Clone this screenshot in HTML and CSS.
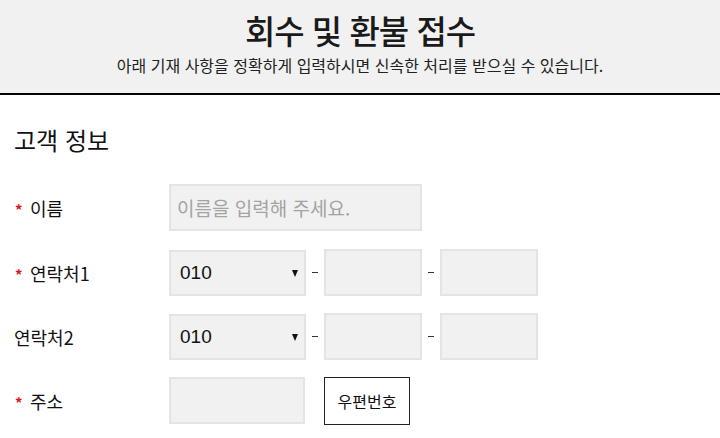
FILE: index.html
```html
<!DOCTYPE html>
<html lang="ko">
  <head>
    <meta charset="utf-8">
    <title>회수 및 환불 접수</title>
    <link rel="stylesheet" href="styles.css">
  </head>
  <body>
    <div class="top">
      <h1>회수 및 환불 접수</h1>
      <p>아래 기재 사항을 정확하게 입력하시면 신속한 처리를 받으실 수 있습니다.</p>
    </div>

    <div class="section">
      <h2>고객 정보</h2>

      <div class="row">
        <label class="label"><span class="req">*</span>이름</label>
        <input type="text" class="field wide" placeholder="이름을 입력해 주세요.">
      </div>

      <div class="row">
        <label class="label"><span class="req">*</span>연락처1</label>
        <div class="pick">
          <select class="field">
            <option>010</option>
            <option>011</option>
            <option>016</option>
          </select>
        </div>
        <span class="dash"></span>
        <input type="text" class="field short">
        <span class="dash"></span>
        <input type="text" class="field short">
      </div>

      <div class="row">
        <label class="label">연락처2</label>
        <div class="pick">
          <select class="field">
            <option>010</option>
            <option>011</option>
            <option>016</option>
          </select>
        </div>
        <span class="dash"></span>
        <input type="text" class="field short">
        <span class="dash"></span>
        <input type="text" class="field short">
      </div>

      <div class="row">
        <label class="label"><span class="req">*</span>주소</label>
        <input type="text" class="field zip">
        <button type="button" class="btn">우편번호</button>
      </div>
    </div>
  </body>
</html>
```

FILE: styles.css
```css
BODY
{
	margin: 0;
	font-family: "Noto Sans CJK KR", "Noto Sans", sans-serif;
	color: #111;
	background: #FFF;
}
.top
{
	height: 93px;
	background: #F1F1F1;
	border-bottom: 2px solid #000;
	text-align: center;
}
.top H1
{
	margin: 0;
	padding-top: 9px;
	font-size: 33px;
	line-height: 42px;
	font-weight: 500;
	letter-spacing: -1px;
	color: #1A1A1A;
}
.top P
{
	margin: 3px 0 0;
	font-size: 16px;
	line-height: 22px;
	color: #222;
}
.section
{
	padding: 0 14px;
}
.section H2
{
	margin: 28px 0 28px;
	font-size: 24px;
	line-height: 33px;
	font-weight: 400;
}
.row
{
	display: flex;
	align-items: center;
	height: 47px;
	margin-bottom: 17px;
}
.row:first-of-type
{
	margin-bottom: 18px;
}
.label
{
	width: 155px;
	font-size: 18px;
	display: flex;
	align-items: center;
}
.req
{
	color: #E8141C;
	font-weight: 700;
	font-size: 15px;
	width: 15px;
	padding-left: 1px;
	margin-top: 4px;
}
.field
{
	box-sizing: border-box;
	height: 47px;
	border: 2px solid #E4E4E4;
	background: #F1F1F1;
	font-family: inherit;
	font-size: 19px;
	color: #111;
	padding: 0 6px;
	outline: none;
}
.field::placeholder
{
	color: #A3A3A3;
}
.wide
{
	width: 253px;
}
.short
{
	width: 98px;
}
.zip
{
	width: 136px;
}
.pick
{
	position: relative;
}
.pick SELECT
{
	-webkit-appearance: none;
	appearance: none;
	width: 137px;
	height: 46px;
	padding-left: 9px;
	font-family: "Liberation Sans", sans-serif;
	font-size: 19px;
}
.pick:after
{
	position: absolute;
	content: "";
	right: 8px;
	top: 20px;
	border-left: 3.5px solid transparent;
	border-right: 3.5px solid transparent;
	border-top: 7px solid #111;
}
.dash
{
	width: 6px;
	height: 1px;
	background: #333;
	margin: 0 6px;
}
.btn
{
	box-sizing: border-box;
	margin-left: 19px;
	width: 86px;
	height: 48px;
	border: 1px solid #222;
	background: #FFF;
	font-family: inherit;
	font-size: 16px;
	color: #111;
	padding: 0;
}
```
